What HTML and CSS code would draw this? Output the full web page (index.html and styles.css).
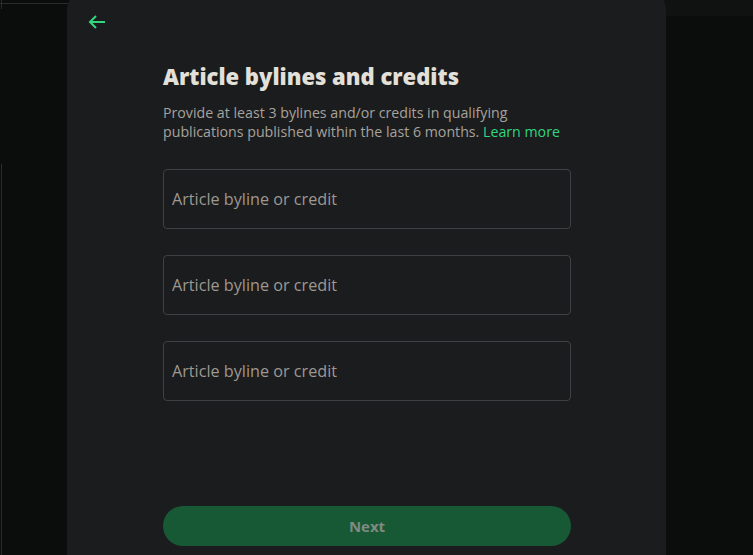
FILE: index.html
```html
<!DOCTYPE html>
<html>
<head>
<meta charset="utf-8">
<link rel="stylesheet" href="styles.css">
</head>
<body>
<div class="bg-line-top"></div>
<div class="bg-line-left"></div>
<div class="bg-line-left2"></div>
<div class="bg-right-top"></div>
<main class="modal">
  <button class="back" aria-label="Back">
    <svg width="18" height="16" viewBox="0 0 18 16"><path d="M17 8H2M8 2L2 8l6 6" fill="none" stroke="#31d67f" stroke-width="2"/></svg>
  </button>
  <section class="content">
    <h1 class="title">Article bylines and credits</h1>
    <p class="desc">Provide at least 3 bylines and/or credits in qualifying publications published within the last 6 months. <a class="link" href="#">Learn more</a></p>
    <div class="fields">
      <input class="field" placeholder="Article byline or credit">
      <input class="field" placeholder="Article byline or credit">
      <input class="field" placeholder="Article byline or credit">
    </div>
    <button class="next">Next</button>
  </section>
</main>
</body>
</html>
```
FILE: styles.css
```css
html, body { margin: 0; padding: 0; }
body {
  background: #0b0d0c;
  width: 753px;
  height: 555px;
  overflow: hidden;
  position: relative;
  font-family: "Open Sans", "Noto Sans", sans-serif;
}
.bg-line-top { position: absolute; left: 0; top: 3px; width: 70px; height: 1px; background: #2a2c2c; }
.bg-line-left { position: absolute; left: 1px; top: 0; width: 1px; height: 9px; background: #2a2c2c; }
.bg-line-left2 { position: absolute; left: 1px; top: 164px; width: 1px; height: 400px; background: #2a2c2c; }
.bg-right-top { position: absolute; left: 660px; top: 0; width: 93px; height: 16px; background: #101211; }
.modal {
  position: relative;
  margin: -7px 0 0 67px;
  width: 599px;
  height: 580px;
  background: #1b1c1e;
  border-radius: 16px 16px 0 0;
  box-sizing: border-box;
  padding: 20px 95px 0 96px;
}
.back {
  position: absolute;
  left: 21px;
  top: 21px;
  background: none;
  border: 0;
  padding: 0;
  width: 18px;
  height: 16px;
  cursor: pointer;
}
.back svg { display: block; }
.content {
  display: flex;
  flex-direction: column;
  padding-top: 48px;
}
.title {
  margin: 0;
  font-size: 22px;
  font-weight: 800;
  color: #e3e0da;
  line-height: 30px;
  letter-spacing: 0;
}
.desc {
  margin: 12px 0 0;
  font-size: 14.2px;
  line-height: 19px;
  color: #a7a29c;
}
.link { color: #31d67f; text-decoration: none; }
.fields {
  display: flex;
  flex-direction: column;
  gap: 26px;
  margin-top: 28px;
}
.field {
  height: 60px;
  box-sizing: border-box;
  background: transparent;
  border: 1px solid #3e4043;
  border-radius: 4px;
  padding: 0 8px;
  font-family: "Open Sans", "Noto Sans", sans-serif;
  font-size: 16.2px;
  color: #e3e0da;
  outline: none;
}
.field::placeholder { color: #9d9892; }
.next {
  margin-top: 105px;
  height: 40px;
  border: 0;
  border-radius: 20px;
  background: #175934;
  color: #7f8a82;
  font-family: "Open Sans", "Noto Sans", sans-serif;
  font-weight: 700;
  font-size: 15px;
}
```
